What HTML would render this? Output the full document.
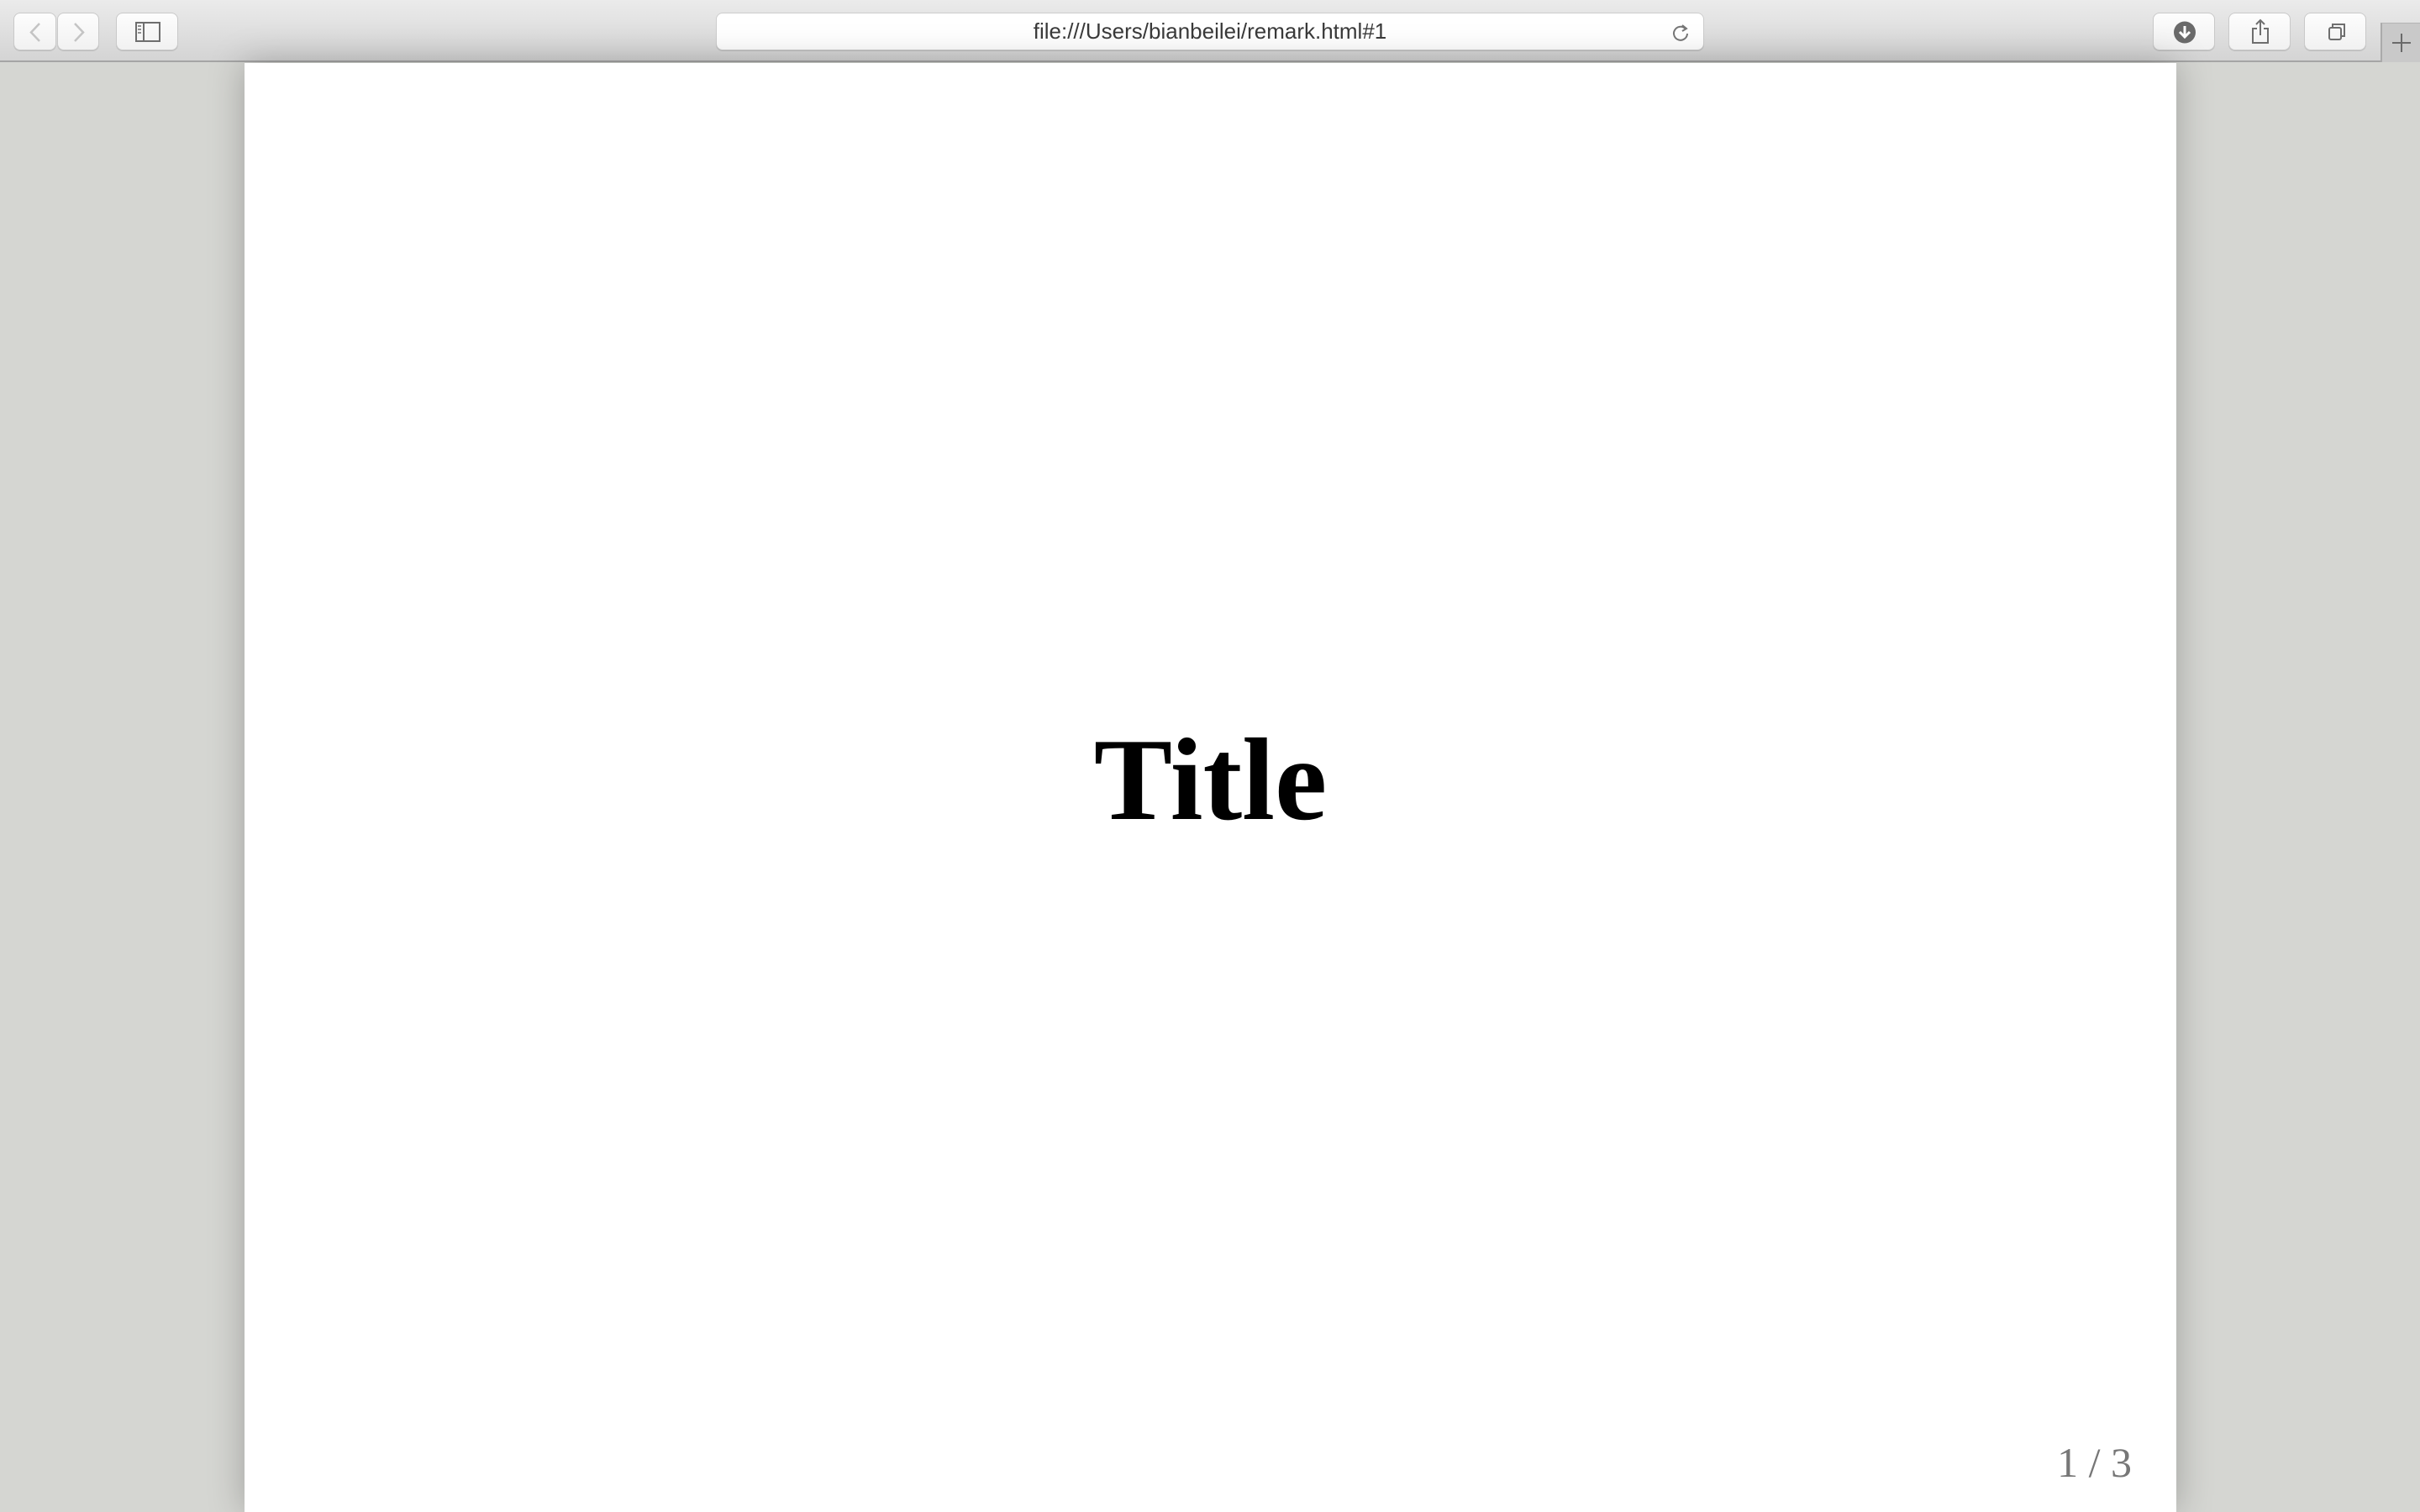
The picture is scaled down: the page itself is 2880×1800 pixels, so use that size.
<!DOCTYPE html>
<html><head><meta charset="utf-8"><style>
*{margin:0;padding:0;box-sizing:border-box}
html,body{width:2880px;height:1800px;overflow:hidden;background:#d5d6d2;font-family:"Liberation Sans",sans-serif}
.tb{position:absolute;left:0;top:0;width:2880px;height:74px;background:linear-gradient(#ebebeb,#d4d4d4);border-bottom:2px solid #a5a5a5}
.btn{position:absolute;top:15px;height:45px;background:linear-gradient(#fdfdfd,#f1f1f1);border:1px solid #c9c9c9;border-radius:8px;box-shadow:0 1px 0 #bdbdbd}
.addr{position:absolute;left:852px;top:15px;width:1176px;height:45px;background:#fff;border:1px solid #cdcdcd;border-radius:8px;box-shadow:0 1px 0 #bdbdbd;text-align:center;line-height:43px;font-size:26px;color:#3a3a3a}
.plus{position:absolute;left:2833px;top:27px;width:47px;height:47px;background:#c9c9c9;border-left:2px solid #aaa;border-top:1px solid #b5b5b5}
.slide{position:absolute;left:291px;top:75px;width:2299px;height:1725px;background:#fff;box-shadow:0 0 40px rgba(0,0,0,.25);overflow:hidden}
.title{position:absolute;left:0;width:100%;top:784px;text-align:center;font-family:"Liberation Serif",serif;font-weight:bold;font-size:140px;line-height:140px;color:#000}
.pn{position:absolute;right:53px;top:1638px;font-family:"Liberation Serif",serif;font-size:50px;line-height:56px;color:#777}
</style></head><body>
<div class="tb">
 <div class="btn" style="left:16px;width:51px"><svg width="51" height="45"><path d="M30 12 L20 22.5 L30 33" stroke="#c4c4c4" stroke-width="2.5" fill="none"/></svg></div>
 <div class="btn" style="left:68px;width:50px"><svg width="50" height="45"><path d="M20 12 L30 22.5 L20 33" stroke="#c4c4c4" stroke-width="2.5" fill="none"/></svg></div>
 <div class="btn" style="left:138px;width:74px"><svg width="74" height="45"><rect x="23" y="11" width="28" height="22" fill="none" stroke="#6e6e6e" stroke-width="2"/><line x1="32" y1="11" x2="32" y2="33" stroke="#6e6e6e" stroke-width="2"/><path d="M25 15h4M25 19h4M25 23h4" stroke="#6e6e6e" stroke-width="1.5"/></svg></div>
 <div class="addr">file:///Users/bianbeilei/remark.html#1<svg style="position:absolute;right:14px;top:11px" width="24" height="24"><path d="M16.5 7 A8 8 0 1 0 19 13" stroke="#777" stroke-width="2" fill="none"/><path d="M13 3 L18 7 L13 10" stroke="#777" stroke-width="2" fill="none"/></svg></div>
 <div class="btn" style="left:2562px;width:74px"><svg width="74" height="45"><circle cx="37" cy="22.5" r="13" fill="#6a6a6a"/><path d="M37 15v13M31 22l6 6 6-6" stroke="#fff" stroke-width="3" fill="none"/></svg></div>
 <div class="btn" style="left:2652px;width:74px"><svg width="74" height="45"><path d="M33 18h-5v17h18v-17h-5" stroke="#6e6e6e" stroke-width="2" fill="none"/><path d="M37 8v18M32 13l5-5 5 5" stroke="#6e6e6e" stroke-width="2" fill="none"/></svg></div>
 <div class="btn" style="left:2742px;width:74px"><svg width="74" height="45"><rect x="29" y="17" width="14" height="14" rx="2" fill="none" stroke="#6e6e6e" stroke-width="2"/><path d="M33 17v-4h14v14h-4" stroke="#6e6e6e" stroke-width="2" fill="none"/></svg></div>
 <div class="plus"><svg width="47" height="47"><path d="M23 12v22M12 23h22" stroke="#6a6a6a" stroke-width="2"/></svg></div>
</div>
<div class="slide">
 <div class="title">Title</div>
 <div class="pn">1 / 3</div>
</div>
</body></html>
